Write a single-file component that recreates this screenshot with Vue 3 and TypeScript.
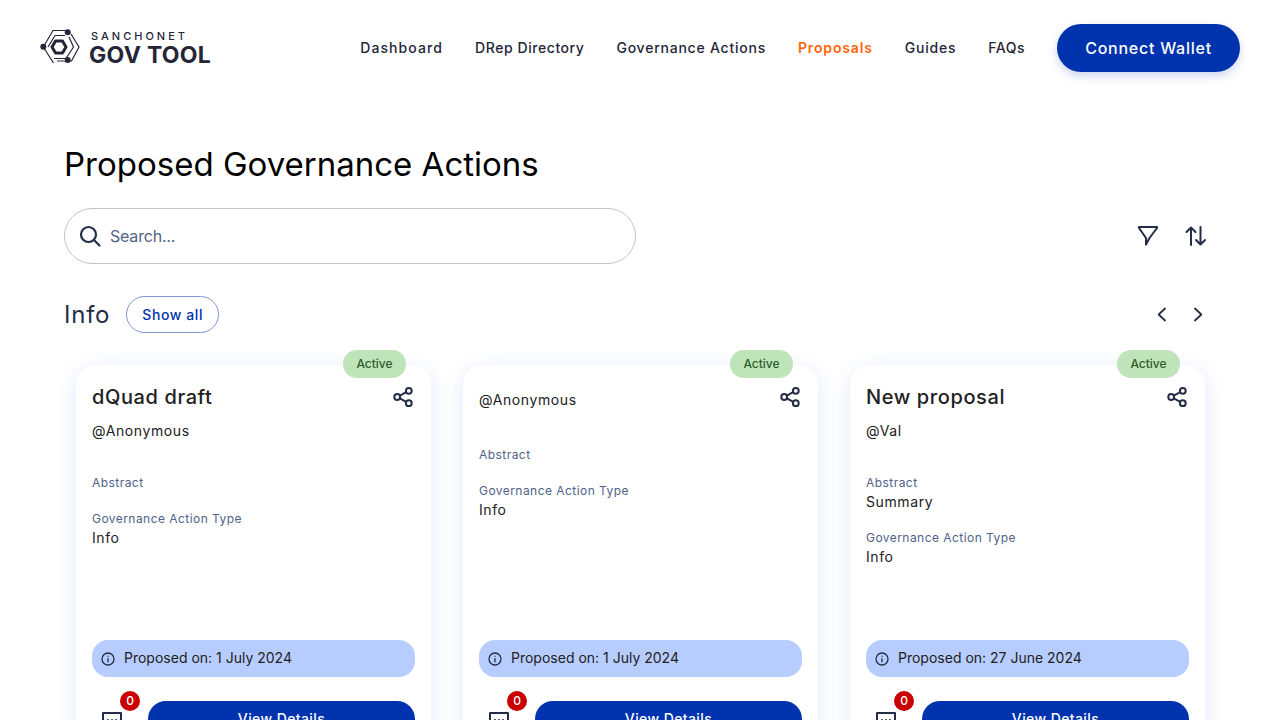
<script setup lang="ts">
interface Card {
  title: string
  author: string
  summary: string
  date: string
}
const nav: string[] = ['Dashboard', 'DRep Directory', 'Governance Actions', 'Proposals', 'Guides', 'FAQs']
const cards: Card[] = [
  { title: 'dQuad draft', author: '@Anonymous', summary: '', date: '1 July 2024' },
  { title: '', author: '@Anonymous', summary: '', date: '1 July 2024' },
  { title: 'New proposal', author: '@Val', summary: 'Summary', date: '27 June 2024' },
]
</script>

<template>
  <div class="page">
    <header class="header">
      <div class="logo">
        <svg width="40" height="36" viewBox="0 0 40 36" fill="none" stroke="#242637" stroke-width="1.2">
          <path d="M3.3 18 L13 1.5 H27 M31 5 L39 18 L31.5 32 H17 M13.5 34 L3.3 18" />
          <path d="M8 18 L15 6.5 H25 M14 29.5 H26 L33.5 18 L29 8" />
          <path d="M12 18 L15.5 12 H22.5 L26 18 L22.5 24 H15.5 Z" stroke-width="3" stroke-linejoin="round" />
          <circle cx="27.7" cy="3.3" r="3" fill="#242637" stroke="none" />
          <circle cx="3.3" cy="17.7" r="3" fill="#242637" stroke="none" />
          <circle cx="27.7" cy="31" r="3" fill="#242637" stroke="none" />
        </svg>
        <div class="logo-text">
          <span class="logo-small">SANCHONET</span>
          <span class="logo-big">GOV TOOL</span>
        </div>
      </div>
      <nav class="nav">
        <span v-for="item in nav" :key="item" class="nav-item" :class="{ current: item === 'Proposals' }">{{ item }}</span>
        <button class="connect">Connect Wallet</button>
      </nav>
    </header>

    <main class="main">
      <h1 class="heading">Proposed Governance Actions</h1>

      <div class="tools">
        <div class="search">
          <svg width="24" height="24" viewBox="0 0 24 24" fill="none" stroke="#242d45" stroke-width="2.2" stroke-linecap="round">
            <circle cx="10.5" cy="10.5" r="7.5" />
            <path d="M16 16 L21.5 21.5" />
          </svg>
          <span class="search-text">Search...</span>
        </div>
        <div class="tool-icons">
          <svg width="24" height="24" viewBox="0 0 24 24" fill="none" stroke="#242d45" stroke-width="2" stroke-linejoin="round" stroke-linecap="round">
            <path d="M3 3 H21 V4 L13.5 14 L10 20.5 V14 L3 4 Z" />
          </svg>
          <svg width="24" height="24" viewBox="0 0 24 24" fill="none" stroke="#242d45" stroke-width="2" stroke-linejoin="round" stroke-linecap="round">
            <path d="M7 21 V3.5 M2.5 8 L7 3.5 L11.5 8 M16.5 3 V20.5 M12 16 L16.5 20.5 L21 16" />
          </svg>
        </div>
      </div>

      <div class="section-row">
        <div class="section-left">
          <h2 class="section-title">Info</h2>
          <button class="show-all">Show all</button>
        </div>
        <div class="arrows">
          <svg width="24" height="24" viewBox="0 0 24 24" fill="none" stroke="#242d45" stroke-width="1.8" stroke-linecap="round" stroke-linejoin="round">
            <path d="M15 5.5 L8.7 11.5 L15 17.5" />
          </svg>
          <svg width="24" height="24" viewBox="0 0 24 24" fill="none" stroke="#242d45" stroke-width="1.8" stroke-linecap="round" stroke-linejoin="round">
            <path d="M9 5.5 L15.3 11.5 L9 17.5" />
          </svg>
        </div>
      </div>

      <div class="cards">
        <article v-for="(card, i) in cards" :key="i" class="card">
          <span class="status">Active</span>
          <div class="card-head">
            <div class="head-text">
              <div v-if="card.title" class="card-title">{{ card.title }}</div>
              <div v-else class="author inline-author">{{ card.author }}</div>
            </div>
            <svg class="share" width="24" height="24" viewBox="0 0 24 24" fill="none" stroke="#242d45" stroke-width="2">
              <circle cx="17.8" cy="5.8" r="2.9" />
              <circle cx="6.2" cy="12" r="2.9" />
              <circle cx="17.8" cy="18.2" r="2.9" />
              <path d="M8.8 10.6 L15.2 7.2 M8.8 13.4 L15.2 16.8" />
            </svg>
          </div>
          <div v-if="card.title" class="author">{{ card.author }}</div>

          <div class="field abstract">
            <div class="label">Abstract</div>
            <div v-if="card.summary" class="value">{{ card.summary }}</div>
          </div>
          <div class="field">
            <div class="label">Governance Action Type</div>
            <div class="value">Info</div>
          </div>

          <div class="date">
            <svg width="14" height="14" viewBox="0 0 14 14" fill="none" stroke="#242d45" stroke-width="1.3" stroke-linecap="round">
              <circle cx="7" cy="7" r="6" />
              <path d="M7 6.6 V9.8 M7 4.2 V4.3" />
            </svg>
            <span class="date-text">Proposed on: {{ card.date }}</span>
          </div>

          <div class="card-foot">
            <div class="comments">
              <span class="badge">0</span>
              <svg width="20" height="20" viewBox="0 0 20 20" fill="none" stroke="#242d45" stroke-width="2" stroke-linejoin="round">
                <path d="M1 2 H19 V15 H8 L4 19 V15 H1 Z" />
                <path d="M6 8 V8.8 M10 8 V8.8 M14 8 V8.8" />
              </svg>
            </div>
            <button class="details">View Details</button>
          </div>
        </article>
      </div>
    </main>
  </div>
</template>

<style>
html,
body {
  margin: 0;
  height: 100%;
  overflow: hidden;
  background: #ffffff;
}
</style>

<style scoped>
.page {
  width: 1280px;
  height: 720px;
  overflow: hidden;
  font-family: "Inter", "Open Sans", sans-serif;
  color: #212121;
}
.header {
  display: flex;
  justify-content: space-between;
  align-items: center;
  height: 96px;
  padding: 0 40px;
  box-sizing: border-box;
}
.logo {
  display: flex;
  align-items: center;
  gap: 9px;
  margin-top: -2px;
}
.logo-text {
  display: flex;
  flex-direction: column;
  line-height: 1;
  color: #242637;
  padding-top: 3px;
}
.logo-small {
  font-size: 11px;
  font-weight: 500;
  letter-spacing: 3px;
  margin-left: 2px;
  line-height: 13px;
}
.logo-big {
  font-size: 23px;
  font-weight: 700;
  line-height: 24px;
  letter-spacing: 0.3px;
}
.nav {
  display: flex;
  align-items: center;
  gap: 32px;
}
.nav-item {
  font-size: 14px;
  font-weight: 500;
  letter-spacing: 0.77px;
  color: #242637;
  padding-bottom: 2px;
}
.nav-item:nth-child(1) {
  letter-spacing: 1.1px;
}
.nav-item:nth-child(2) {
  letter-spacing: 0.56px;
}
.nav-item:nth-child(3) {
  letter-spacing: 0.77px;
}
.nav-item:nth-child(6) {
  letter-spacing: 0.5px;
}
.nav-item.current {
  color: #ff640a;
  font-weight: 600;
  letter-spacing: 0.86px;
}
.connect {
  width: 183px;
  height: 48px;
  border: none;
  border-radius: 24px;
  background: #0033ad;
  color: #fff;
  font: 500 16px "Inter", sans-serif;
  letter-spacing: 0.75px;
  box-shadow: 0 4px 10px rgba(0, 51, 173, 0.2);
}
.main {
  padding: 0 64px;
}
.heading {
  margin: 44px 0 0;
  font-size: 33px;
  font-weight: 400;
  line-height: 48px;
  color: #000;
}
.tools {
  display: flex;
  justify-content: space-between;
  align-items: center;
  margin-top: 20px;
}
.search {
  width: 572px;
  height: 56px;
  box-sizing: border-box;
  display: flex;
  align-items: center;
  gap: 8px;
  padding-left: 13px;
  border: 1px solid #c4c4c4;
  border-radius: 28px;
}
.search-text {
  font-size: 16px;
  color: #506288;
  letter-spacing: -0.2px;
}
.tool-icons {
  display: flex;
  gap: 24px;
  padding-right: 8px;
}
.section-row {
  display: flex;
  justify-content: space-between;
  align-items: center;
  margin-top: 32px;
  height: 37px;
}
.section-left {
  display: flex;
  align-items: center;
  gap: 16px;
}
.section-title {
  margin: 0;
  font-size: 24px;
  font-weight: 400;
  letter-spacing: 0.75px;
  color: #242d45;
  line-height: 36px;
}
.show-all {
  width: 93px;
  height: 37px;
  border: 1px solid #7f96d6;
  border-radius: 19px;
  background: #fff;
  color: #0033ad;
  font: 500 14px "Inter", sans-serif;
  letter-spacing: 0.6px;
}
.arrows {
  display: flex;
  gap: 12px;
  padding-right: 6px;
}
.cards {
  display: flex;
  gap: 32px;
  margin: 32px 0 0 12px;
}
.card {
  position: relative;
  flex: none;
  width: 355px;
  height: 392px;
  box-sizing: border-box;
  padding: 16px;
  display: flex;
  flex-direction: column;
  background: #fff;
  border-radius: 20px;
  box-shadow: 0 4px 20px rgba(51, 85, 255, 0.14);
}
.status {
  position: absolute;
  top: -15px;
  right: 25px;
  width: 63px;
  height: 28px;
  border-radius: 14px;
  background: #c0e4ba;
  color: #2c5c2a;
  font-size: 12px;
  font-weight: 500;
  line-height: 28px;
  text-align: center;
}
.card-head {
  display: flex;
  justify-content: space-between;
  align-items: center;
  height: 32px;
}
.card-title {
  font-size: 20px;
  font-weight: 500;
  line-height: 32px;
  letter-spacing: 0.6px;
}
.author {
  font-size: 14px;
  line-height: 20px;
  letter-spacing: 0.6px;
  margin-top: 8px;
}
.inline-author {
  margin-top: 6px;
}
.field {
  margin-top: 17px;
}
.abstract {
  margin-top: 33px;
  min-height: 19px;
}
.label {
  font-size: 12px;
  line-height: 18px;
  letter-spacing: 0.45px;
  color: #506288;
}
.value {
  font-size: 14px;
  line-height: 20px;
  letter-spacing: 0.6px;
}
.date {
  margin-top: auto;
  height: 37px;
  display: flex;
  align-items: center;
  gap: 9px;
  padding-left: 9px;
  border-radius: 16px;
  background: #b8cdff;
  font-size: 14px;
  flex: none;
}
.date-text {
  padding-bottom: 2px;
}
.card-foot {
  display: flex;
  align-items: flex-start;
  gap: 16px;
  margin-top: 24px;
  flex: none;
  height: 40px;
}
.comments {
  position: relative;
  width: 40px;
  height: 40px;
  display: flex;
  align-items: center;
  justify-content: center;
}
.badge {
  position: absolute;
  top: -10px;
  right: -8px;
  width: 20px;
  height: 20px;
  border-radius: 50%;
  background: #c80000;
  color: #fff;
  font-size: 12px;
  font-weight: 500;
  line-height: 20px;
  text-align: center;
}
.details {
  flex: 1;
  height: 36px;
  padding: 0 0 2px;
  border: none;
  border-radius: 20px;
  background: #0033ad;
  color: #fff;
  font: 500 14px "Inter", sans-serif;
  letter-spacing: 0.4px;
}
</style>
